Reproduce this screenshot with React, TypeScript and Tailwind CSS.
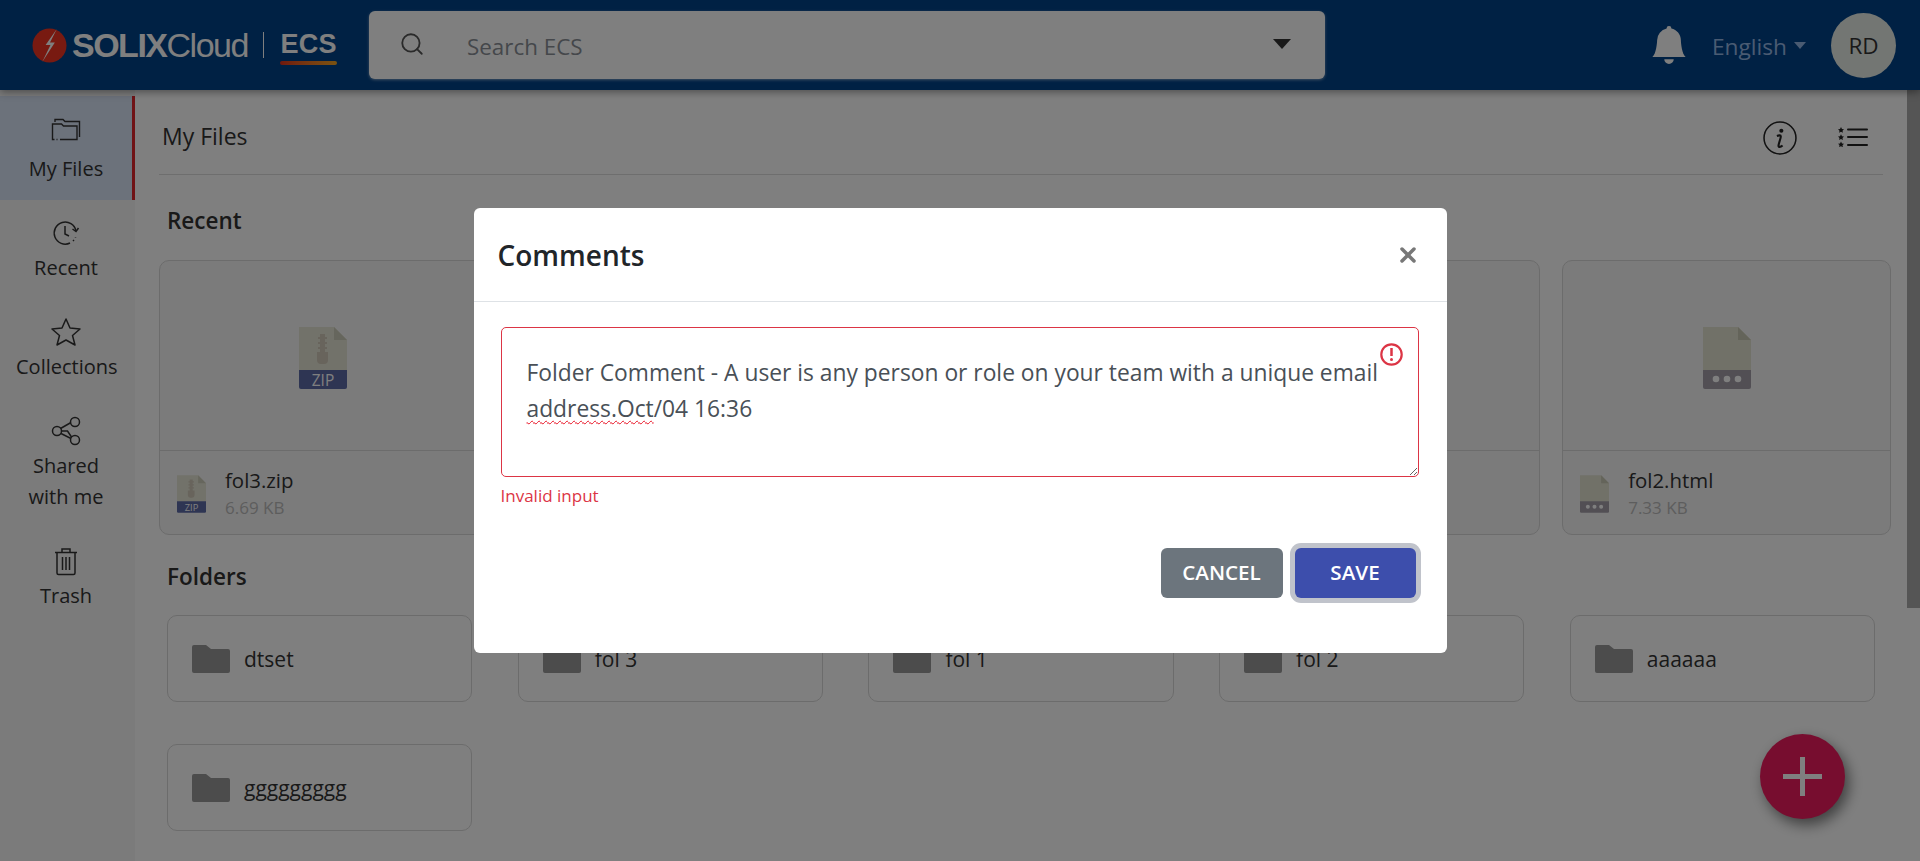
import React from "react";
import { Search, X } from "lucide-react";
import { BsBellFill } from "react-icons/bs";

// the three middle cards sit behind the dialog, so they stay empty
const recentFiles = [
  { id: 1, name: "fol3.zip", size: "6.69 KB", kind: "zip" },
  { id: 2 },
  { id: 3 },
  { id: 4 },
  { id: 5, name: "fol2.html", size: "7.33 KB", kind: "doc" },
];

const folders = ["dtset", "fol 3", "fol 1", "fol 2", "aaaaaa", "ggggggggg"];

const ZipIcon = ({ className }: { className: string }) => (
  <svg viewBox="0 0 48 62" className={className}>
    <path d="M0 0h35l13 13v31H0z" fill="#e4e4d4" />
    <path d="M35 0l13 13H35z" fill="#cdcdba" />
    <path d="M21 7h5v3h2v2h-2v3h2v2h-2v3h2v2h-2v3h3v8a4 4 0 0 1-4 4h-3a4 4 0 0 1-4-4v-8h3v-3h-2v-2h2v-3h-2v-2h2v-3h-2v-2h2z" fill="#d0c8b8" />
    <path d="M0 43h48v17a2 2 0 0 1-2 2H2a2 2 0 0 1-2-2z" fill="#5c6aa6" />
    <text x="24" y="58.500" textAnchor="middle" fontSize="15.500" fill="#ffffff" fontFamily="Open Sans, sans-serif">ZIP</text>
  </svg>
);

const DocIcon = ({ className }: { className: string }) => (
  <svg viewBox="0 0 48 62" className={className}>
    <path d="M0 0h35l13 13v31H0z" fill="#e2e2d0" />
    <path d="M35 0l13 13H35z" fill="#c8c8b4" />
    <path d="M0 43h48v17a2 2 0 0 1-2 2H2a2 2 0 0 1-2-2z" fill="#a49ea9" />
    <circle cx="13" cy="52" r="3.300" fill="#fff" />
    <circle cx="24" cy="52" r="3.300" fill="#fff" />
    <circle cx="35" cy="52" r="3.300" fill="#fff" />
  </svg>
);

const FolderIcon = () => (
  <svg viewBox="0 0 38 28" className="h-[28px] w-[38px] shrink-0">
    <path d="M0 2a2 2 0 0 1 2-2h12l5 4h17a2 2 0 0 1 2 2v20a2 2 0 0 1-2 2H2a2 2 0 0 1-2-2z" fill="#989898" />
  </svg>
);

const navIconClass = "h-[30px] w-[30px] text-[#333]";

const FilesGlyph = () => (
  <svg viewBox="0 0 30 24" fill="none" stroke="currentColor" strokeWidth="1.400" className="h-[24px] w-[30px] text-[#333]">
    <path d="M4 4V1.500h8l2 2h14.500V19" />
    <path d="M3.500 21.500H1.500V6h9l2 2h13.500v13.500H9" />
    <path d="M5.500 21.500h1" />
  </svg>
);

const RecentGlyph = () => (
  <svg viewBox="0 0 30 30" fill="none" stroke="currentColor" strokeWidth="1.500" className={navIconClass}>
    <path d="M25 13a11 11 0 1 0-6 12" />
    <path d="M14 8v8l4 2" />
    <path d="M27.500 10l-2.500 3.500-3.500-2.500" />
    <path d="M22 23l1-1M24.500 19.500v-.5" />
  </svg>
);

const StarGlyph = () => (
  <svg viewBox="0 0 30 30" fill="none" stroke="currentColor" strokeWidth="1.500" strokeLinejoin="round" className={navIconClass}>
    <path d="M15 2l4 9 10 1-7.500 6.500L24 28l-9-5-9 5 2.500-9.500L1 12l10-1z" />
  </svg>
);

const ShareGlyph = () => (
  <svg viewBox="0 0 30 30" fill="none" stroke="currentColor" strokeWidth="1.500" className={navIconClass}>
    <circle cx="6" cy="15" r="4.500" />
    <circle cx="24" cy="6" r="4.500" />
    <circle cx="24" cy="24" r="4.500" />
    <path d="M9.500 12.500L20 6.500M10.500 15h6l4 6M10 17.500l10 5" />
  </svg>
);

const TrashGlyph = () => (
  <svg viewBox="0 0 30 30" fill="none" stroke="currentColor" strokeWidth="1.500" className={navIconClass}>
    <path d="M4 6.500h22M11 6V3h8v3" />
    <path d="M6 7v20a1.500 1.500 0 0 0 1.500 1.500h15A1.500 1.500 0 0 0 24 27V7" />
    <path d="M11.500 11v13M15 11v13M18.500 11v13" />
  </svg>
);

const navItems = [
  { label: "Recent", icon: <RecentGlyph /> },
  { label: "Collections", icon: <StarGlyph /> },
  { label: "Shared with me", icon: <ShareGlyph /> },
  { label: "Trash", icon: <TrashGlyph /> },
];

const InfoGlyph = () => (
  <svg viewBox="0 0 33 33" className="h-[34px] w-[34px] translate-y-[1px] text-[#222]" fill="none" stroke="currentColor">
    <circle cx="16.500" cy="16.500" r="15.500" strokeWidth="1.500" />
    <circle cx="17.800" cy="9.500" r="2" fill="currentColor" stroke="none" />
    <path d="M13.500 14.500c2-.8 3.800-.8 3.800.5 0 1.500-2.300 7.500-2.300 9 0 1.500 2 1.500 4-.2" strokeWidth="2" />
  </svg>
);

const StarListGlyph = () => (
  <svg viewBox="0 0 30 20" className="h-[20px] w-[30px] text-[#222]" fill="currentColor">
    <path d="M3 0l1 2 2 .3-1.500 1.400.4 2L3 4.800 1.100 5.700l.4-2L0 2.300 2 2z" />
    <path d="M3 7.300l1 2 2 .3-1.500 1.400.4 2L3 12.100l-1.900.9.400-2L0 9.600l2-.3z" />
    <path d="M3 14.500l1 2 2 .3-1.500 1.400.4 2L3 19.300l-1.900.7.400-2L0 16.800l2-.3z" />
    <rect x="9" y="1.500" width="21" height="2" rx="1" />
    <rect x="9" y="9" width="21" height="2" rx="1" />
    <rect x="9" y="17" width="21" height="2" rx="1" />
  </svg>
);

export default function App() {
  return (
    <div className="relative h-[861px] overflow-hidden bg-white font-['Open_Sans',sans-serif] text-[#333]">
      {/* top bar */}
      <header className="relative z-10 flex h-[90px] items-center bg-[#004288] shadow-[0_2px_8px_rgba(0,0,0,0.4)]">
        <div className="ml-[32px] flex w-[337px] shrink-0 items-center font-['Liberation_Sans',sans-serif] text-white">
          <svg viewBox="0 0 36 36" className="h-[35px] w-[35px] shrink-0">
            <circle cx="18" cy="18" r="17.500" fill="#f03522" />
            <path d="M25.500 1L14 17.500h5L10.500 35 23.500 15h-5z" fill="#fff" />
          </svg>
          <span className="ml-[5px] text-[34px] leading-none font-bold tracking-[-1.500px]">SOLIX</span>
          <span className="text-[34px] leading-none tracking-[-1.500px]">Cloud</span>
          <span className="ml-[15px] h-[26px] w-[1.500px] bg-white" />
          <div className="relative ml-[16px]">
            <span className="text-[27px] leading-none font-bold tracking-[0.300px]">ECS</span>
            <span className="absolute -bottom-[5px] left-0 h-[4px] w-full rounded-full bg-linear-to-r from-[#e0301e] to-[#f5a623]" />
          </div>
        </div>
        <div className="flex h-[68px] w-[956px] shrink-0 items-center rounded-[6px] bg-white pr-[34px] pl-[30px] shadow-[0_1px_3px_rgba(255,255,255,0.5)]">
          <Search className="h-[26px] w-[26px] -translate-y-[1px] text-[#555]" strokeWidth={1.700} />
          <span className="ml-[42px] flex-1 pt-[3px] text-[22.400px] text-[#8a8f96]">Search ECS</span>
          <span className="h-0 w-0 -translate-y-[1px] border-x-[9px] border-t-[10px] border-x-transparent border-t-[#333]" />
        </div>
        <div className="ml-auto flex items-center">
          <BsBellFill className="h-[38px] w-[38px] text-white" />
          <span className="ml-[24px] pt-[4px] text-[22.700px] text-[#94b6e4]">English</span>
          <span className="ml-[7px] h-0 w-0 border-x-[6px] border-t-[7px] border-x-transparent border-t-[#94b6e4]" />
          <div className="mr-[24px] ml-[25px] flex h-[65px] w-[65px] items-center justify-center rounded-full bg-[#e6ece6] pt-[2px] text-[22.500px] text-[#333]">RD</div>
        </div>
      </header>

      <div className="flex h-[771px]">
        {/* side nav */}
        <nav className="w-[135px] shrink-0 bg-[#f6f6f6] pt-[6px]">
          <div className="flex h-[104px] flex-col items-center border-r-[3px] border-[#e0262c] bg-[#d8e4f6] pt-[22px]">
            <FilesGlyph />
            <span className="mt-[11px] text-[20px] leading-[32px]">My Files</span>
          </div>
          {navItems.map((item) => (
            <div key={item.label} className="flex flex-col items-center pt-[18px] pr-[3px] pb-[16px]">
              {item.icon}
              <span className="mt-[4px] w-[100px] text-center text-[20px] leading-[31px]">{item.label}</span>
            </div>
          ))}
        </nav>

        {/* content */}
        <main className="min-w-0 flex-1 px-[24px]">
          <div className="flex h-[85px] items-center justify-between border-b border-[#dddddd] pt-[9px] pr-[15px] pl-[3px]">
            <span className="text-[23px]">My Files</span>
            <div className="flex items-center gap-[41px]">
              <InfoGlyph />
              <StarListGlyph />
            </div>
          </div>

          <h2 className="mt-[29px] ml-[8px] text-[22.500px] leading-[34px] font-semibold">Recent</h2>
          <div className="mt-[22px] grid w-[1732px] grid-cols-5 gap-[22px]">
            {recentFiles.map((file) => (
              <div key={file.id} className="h-[275px] rounded-[10px] border border-[#d8d8d8] bg-[#f6f6f6]">
                <div className="flex h-[190px] items-center justify-center border-b border-[#d8d8d8] pt-[5px]">
                  {file.kind === "zip" && <ZipIcon className="h-[62px] w-[48px]" />}
                  {file.kind === "doc" && <DocIcon className="h-[62px] w-[48px]" />}
                </div>
                {file.name && (
                  <div className="flex items-center pt-[15px] pl-[17px]">
                    {file.kind === "zip" ? <ZipIcon className="h-[38px] w-[29px]" /> : <DocIcon className="h-[38px] w-[29px]" />}
                    <div className="ml-[19px]">
                      <div className="text-[20.400px] leading-[28px]">{file.name}</div>
                      <div className="text-[17px] leading-[28px] text-[#bbbbbb]">{file.size}</div>
                    </div>
                  </div>
                )}
              </div>
            ))}
          </div>

          <h2 className="mt-[25px] ml-[8px] text-[22.500px] leading-[34px] font-semibold">Folders</h2>
          <div className="mt-[21px] ml-[8px] grid w-[1708px] grid-cols-5 gap-x-[45.500px] gap-y-[42px]">
            {folders.map((folder) => (
              <div key={folder} className="flex h-[87px] items-center rounded-[10px] border border-[#d8d8d8] bg-white pl-[24px]">
                <FolderIcon />
                <span className="ml-[14px] pt-[2px] text-[21px]">{folder}</span>
              </div>
            ))}
          </div>
        </main>

        {/* page scrollbar */}
        <div className="w-[13px] shrink-0">
          <div className="h-[518px] bg-[#aaaaaa]" />
        </div>
      </div>

      <button className="absolute top-[734px] left-[1760px] flex h-[85px] w-[85px] items-center justify-center rounded-full bg-[#ef1a5e] shadow-[4px_6px_14px_rgba(0,0,0,0.5)]">
        <svg viewBox="0 0 39 39" className="h-[39px] w-[39px]" fill="#fff">
          <rect x="17" y="0" width="5" height="39" />
          <rect x="0" y="17" width="39" height="5" />
        </svg>
      </button>

      {/* modal */}
      <div className="fixed inset-0 z-20 bg-black/50">
        <div className="mx-auto mt-[208px] h-[445px] w-[973px] rounded-[6px] bg-white">
          <div className="flex h-[94px] items-center justify-between border-b border-[#dee2e6] pr-[27px] pl-[24px]">
            <h3 className="pt-[1px] text-[28px] font-semibold text-[#212529]">Comments</h3>
            <X className="h-[24px] w-[24px] text-[#777777]" strokeWidth={3.500} />
          </div>
          <div className="relative mt-[25px] ml-[27px] w-[918px]">
            <div className="h-[150px] resize-y overflow-auto rounded-[5px] border border-[#dc3545] pt-[27px] pr-[25px] pl-[25px] text-[22.800px] leading-[36px] text-[#495057]">
              Folder Comment - A user is any person or role on your team with a unique email{" "}
              <span className="underline decoration-[#e81123] decoration-wavy decoration-1 underline-offset-[3px]">address.Oct</span>
              /04 16:36
            </div>
            <svg viewBox="0 0 23 23" className="absolute top-[16px] right-[16px] h-[23px] w-[23px]" fill="none" stroke="#dc3545">
              <circle cx="11.500" cy="11.500" r="10.200" strokeWidth="2.200" />
              <path d="M11.500 5v8" strokeWidth="2.500" />
              <circle cx="11.500" cy="16.500" r="1.500" fill="#dc3545" stroke="none" />
            </svg>
          </div>
          <div className="mt-[6px] ml-[27px] text-[17px] leading-[26px] text-[#dc3545]">Invalid input</div>
          <div className="mt-[39px] flex justify-end gap-[12px] pr-[31px]">
            <button className="h-[50px] w-[122px] rounded-[6px] bg-[#6c757d] pb-[2px] text-[20.600px] font-semibold text-white">CANCEL</button>
            <button className="h-[50px] w-[121px] rounded-[6px] bg-[#3d4eac] pb-[2px] text-[20.600px] font-semibold text-white ring-[5px] ring-[#c0c3cb]">SAVE</button>
          </div>
        </div>
      </div>
    </div>
  );
}
